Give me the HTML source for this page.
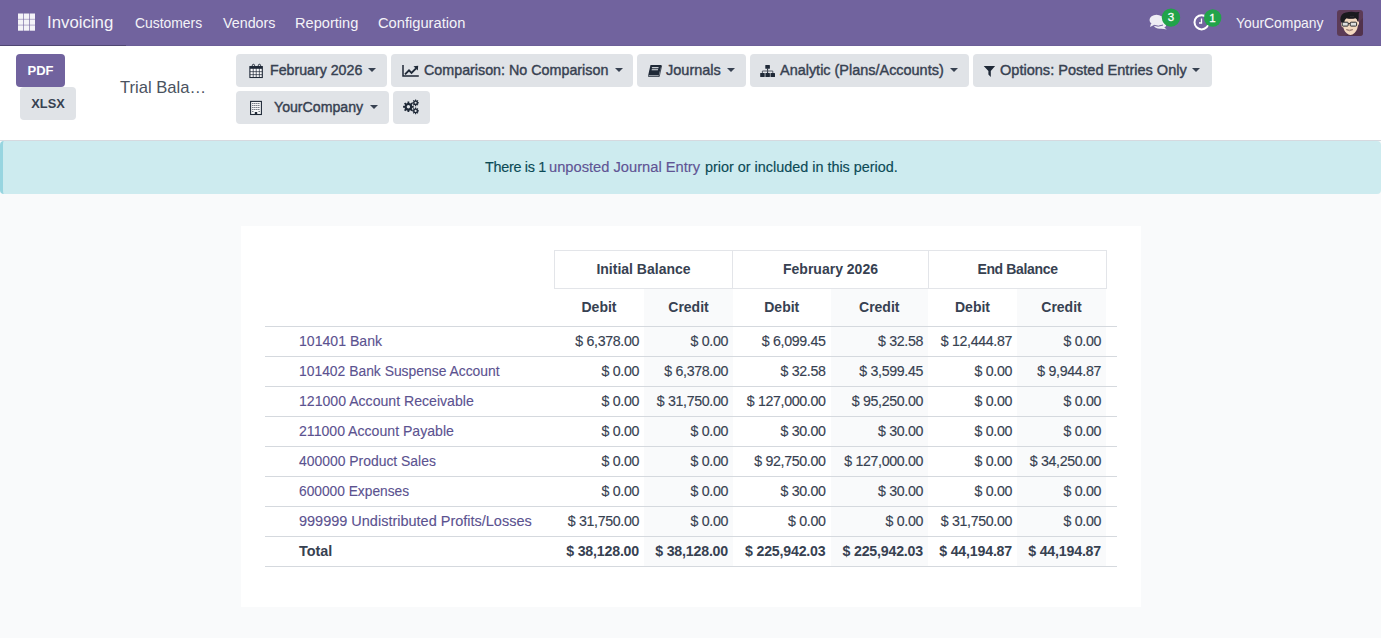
<!DOCTYPE html>
<html><head><meta charset="utf-8">
<style>
*{box-sizing:border-box;margin:0;padding:0}
html,body{width:1381px;height:638px;overflow:hidden}
body{font-family:"Liberation Sans",sans-serif;background:#f9fafb;color:#374151;position:relative}
.abs{position:absolute;white-space:nowrap}
#nav{position:absolute;left:0;top:0;width:1381px;height:46px;background:#71639e;border-bottom:1px solid #6c5f98}
#brandline{position:absolute;left:0;top:45px;width:126px;height:1px;background:#4f4672}
.nt{position:absolute;color:#f4f3f8;font-size:14px;line-height:20px;top:13px;white-space:nowrap}
#cp{position:absolute;left:0;top:46px;width:1381px;height:95px;background:#fff;border-bottom:1px solid #d6d9df}
.btn{position:absolute;height:33px;border-radius:4px;background:#e0e3e7;color:#374151;font-size:14.3px;line-height:33px;white-space:nowrap;-webkit-text-stroke:0.4px #374151}
.btn span{position:absolute;top:0}
.caret{position:absolute;top:14px;width:0;height:0;border-left:4.6px solid transparent;border-right:4.6px solid transparent;border-top:4.6px solid #374151}
#alert{position:absolute;left:0;top:141px;width:1381px;height:53px;background:#cdebef;border-left:3px solid #97d5e0;border-radius:4px}
.at{top:157px;font-size:14.4px;line-height:20px;color:#0b4a56;-webkit-text-stroke:0.15px currentColor}
#sheet{position:absolute;left:241px;top:226px;width:900px;height:381px;background:#fff}
#sheet div{position:absolute;white-space:nowrap}
.gc{background:#f9fafb}
.hc{border:1px solid #e3e5e9;text-align:center;font-weight:bold;font-size:14px;line-height:37px;color:#374151}
.h2{text-align:center;font-weight:bold;font-size:14px;line-height:38px;height:38px;color:#374151}
.rl{height:1px;background:#d5d9de}
.an{font-size:14.1px;line-height:29px;color:#5b5290;-webkit-text-stroke:0.12px #5b5290}
.num{text-align:right;padding-right:5px;font-size:14.2px;letter-spacing:-0.34px;line-height:29px;color:#374151;-webkit-text-stroke:0.15px #374151}
.tot{font-weight:bold;color:#374151;-webkit-text-stroke:0}
.num.tot{font-size:14.2px;letter-spacing:-0.2px;-webkit-text-stroke:0}
</style></head><body>
<div id="nav"><div id="brandline"></div>
  <svg class="abs" style="left:18px;top:13px" width="17" height="18" viewBox="0 -0.5 17 18"><g fill="#f4f3f8"><rect x="0" y="0" width="5.3" height="5.4"/><rect x="5.9" y="0" width="5.3" height="5.4"/><rect x="11.8" y="0" width="5.3" height="5.4"/><rect x="0" y="5.9" width="5.3" height="5.4"/><rect x="5.9" y="5.9" width="5.3" height="5.4"/><rect x="11.8" y="5.9" width="5.3" height="5.4"/><rect x="0" y="11.8" width="5.3" height="5.4"/><rect x="5.9" y="11.8" width="5.3" height="5.4"/><rect x="11.8" y="11.8" width="5.3" height="5.4"/></g></svg>
  <div class="nt" style="left:47px;font-size:16.8px;top:13px">Invoicing</div>
  <div class="nt" style="left:135px;font-size:13.9px">Customers</div>
  <div class="nt" style="left:223px;font-size:14.3px">Vendors</div>
  <div class="nt" style="left:295px;font-size:14.6px">Reporting</div>
  <div class="nt" style="left:378px;font-size:14.7px">Configuration</div>
  <div class="nt" style="left:1236px;font-size:13.9px">YourCompany</div>
  <svg class="abs" style="left:1140px;top:5px" width="90" height="35" viewBox="1140 5 90 35">
    <!-- chat bubbles -->
    <g fill="#eeedf4">
      <ellipse cx="1160" cy="25.2" rx="6" ry="3.6"/>
      <path d="M1163.5 27 L1166.8 29.5 L1161 28.5 Z"/>
      <ellipse cx="1156.5" cy="20" rx="7" ry="5.3"/>
      <path d="M1151 23.5 L1150 27 L1155 24.6 Z"/>
    </g>
    <path d="M1154 25.3 Q1158 27.2 1163 25" stroke="#71639e" stroke-width="1" fill="none"/>
    <circle cx="1171" cy="17.6" r="9.2" fill="#21a34a"/>
    <text x="1171" y="21.4" text-anchor="middle" font-family="Liberation Sans" font-size="11.5" fill="#fff" stroke="#fff" stroke-width="0.3">3</text>
    <!-- clock -->
    <circle cx="1201.6" cy="22.3" r="7.1" stroke="#fff" stroke-width="2" fill="none"/>
    <path d="M1201.5 18.5 V23 H1199" stroke="#fff" stroke-width="1.3" fill="none"/>
    <circle cx="1212.7" cy="18" r="8.7" fill="#21a34a"/>
    <text x="1212.5" y="21.6" text-anchor="middle" font-family="Liberation Sans" font-size="11.5" fill="#fff" stroke="#fff" stroke-width="0.3">1</text>
  </svg>
  <svg class="abs" style="left:1337px;top:10px" width="26" height="26" viewBox="0 0 26 26">
    <rect width="26" height="26" rx="3" fill="#5c3b56"/><path d="M26 8 V23 Q26 26 23 26 H8 Z" fill="#4e2f48" opacity="0.7"/>
    <path d="M5.5 12 Q3.8 12.3 4 14.5 Q4.4 17 6.3 17.6 Q7.5 22.5 11.5 24.6 Q13.5 25.4 15.5 24.5 Q20 22 21 15.5 Q22.5 14.5 22 12 Q21 11 20.5 11.5 L20 7.5 Q14 9 8 8 Z" fill="#f4d9c0"/>
    <path d="M3.3 9.5 Q3.5 3.5 9 2.4 Q14 1.3 19 2.2 Q21.5 1.8 22.6 2 Q21.5 3.2 21.7 5 Q22.2 7.5 20.8 11.5 Q20.2 9 18.5 8.2 Q14 9.5 9.5 8.2 Q7.5 9.5 7 13 L5.5 12.8 Q3.3 12 3.3 9.5 Z" fill="#1a1a1e"/>
    <path d="M13 6.5 Q15 7 17 6.5" stroke="#3a3a40" stroke-width="0.6" fill="none"/>
    <g stroke="#2a2a2e" stroke-width="1" fill="#dedede">
      <rect x="5.2" y="12.2" width="6" height="3.9" rx="0.9"/>
      <rect x="13.2" y="12.2" width="6.4" height="3.9" rx="0.9"/>
    </g>
    <path d="M11.2 13.5 H13.2" stroke="#2a2a2e" stroke-width="0.9"/>
    <path d="M9.3 19.6 Q12.5 22 15.8 19.6 Q12.5 20.6 9.3 19.6 Z" fill="#fff" stroke="#8b6a5e" stroke-width="0.7"/>
  </svg>
</div>
<div id="cp">
  <div class="btn" style="left:16px;top:8px;width:49px;background:#71639e;color:#fff;font-size:13px;text-align:center;font-weight:bold;-webkit-text-stroke:0">PDF</div>
  <div class="btn" style="left:20px;top:41px;width:56px;font-size:12.8px;text-align:center;font-weight:bold;-webkit-text-stroke:0">XLSX</div>
  <div class="abs" style="left:120px;top:31px;font-size:16.6px;line-height:22px;color:#4a5260">Trial Bala…</div>

  <div class="btn" style="left:236px;top:8px;width:151px"><span style="left:34px;font-size:14.2px">February 2026</span><i class="caret" style="left:132px"></i></div>
  <div class="btn" style="left:391px;top:8px;width:242px"><span style="left:33px;font-size:14.3px">Comparison: No Comparison</span><i class="caret" style="left:224px"></i></div>
  <div class="btn" style="left:637px;top:8px;width:109px"><span style="left:29px;font-size:14.5px">Journals</span><i class="caret" style="left:90px"></i></div>
  <div class="btn" style="left:750px;top:8px;width:219px"><span style="left:30px;font-size:14.45px">Analytic (Plans/Accounts)</span><i class="caret" style="left:200px"></i></div>
  <div class="btn" style="left:973px;top:8px;width:239px"><span style="left:27px;font-size:14.55px">Options: Posted Entries Only</span><i class="caret" style="left:219px"></i></div>
  <div class="btn" style="left:236px;top:45px;width:153px"><span style="left:38px;font-size:14.15px">YourCompany</span><i class="caret" style="left:134px"></i></div>
  <div class="btn" style="left:393px;top:45px;width:37px"></div>
</div>

<svg class="abs" style="left:0;top:0" width="1381" height="140" viewBox="0 0 1381 140">
 <!-- calendar -->
 <rect x="249.9" y="66.6" width="12.4" height="10.9" fill="#fbfbfc" stroke="#1f2937" stroke-width="1.1"/>
 <rect x="249.9" y="66.4" width="12.4" height="2.4" fill="#1f2937"/>
 <g fill="#1f2937">
  <rect x="252.8" y="68" width="0.7" height="9.5"/><rect x="255.8" y="68" width="0.7" height="9.5"/><rect x="258.9" y="68" width="0.7" height="9.5"/>
  <rect x="249.9" y="71.4" width="12.4" height="0.7"/><rect x="249.9" y="74.4" width="12.4" height="0.7"/>
 </g>
 <path d="M252.3 67.5 V65.6 Q252.3 64.3 253.5 64.3 Q254.6 64.3 254.6 65.6 V67.5" stroke="#1f2937" stroke-width="1" fill="none"/>
 <path d="M258.3 67.5 V65.6 Q258.3 64.3 259.5 64.3 Q260.6 64.3 260.6 65.6 V67.5" stroke="#1f2937" stroke-width="1" fill="none"/>
 <!-- line chart -->
 <path d="M403 65 V76 H418.8" stroke="#1f2937" stroke-width="1.5" fill="none"/>
 <path d="M405 74.3 L409 70.3 L411.5 72.8 L416 68.3" stroke="#1f2937" stroke-width="1.9" fill="none"/>
 <path d="M413.5 66.2 L418.2 65.8 L417.8 70.5 Z" fill="#1f2937"/>
 <!-- book -->
 <path d="M650.5 65 H661.6 L658.8 75.3 H648.2 Z" fill="#1f2937"/>
 <path d="M648.2 75.3 H658.8 L659.2 76.7 H648.4 Q647.6 76 648.2 75.3 Z" fill="#1f2937"/>
 <rect x="652" y="67.2" width="6.5" height="0.9" fill="#e0e3e7" transform="skewX(-15)" style="transform-box:fill-box"/>
 <path d="M652.3 67.4 H658.6 L658.4 68.3 H652.1 Z M651.8 69.3 H658.1 L657.9 70.2 H651.6 Z" fill="#e0e3e7"/>
 <path d="M648.8 75.4 H658.6 L658.4 76 H648.7 Z" fill="#e0e3e7"/>
 <path d="M661.6 65.8 L659.2 76.7" stroke="#1f2937" stroke-width="0.8"/>
 <!-- sitemap -->
 <g fill="#1f2937">
  <rect x="765.3" y="65" width="4.6" height="3.8" rx="0.5"/>
  <rect x="760.2" y="73" width="4.5" height="3.9" rx="0.5"/>
  <rect x="765.4" y="73" width="4.5" height="3.9" rx="0.5"/>
  <rect x="770.5" y="73" width="4.5" height="3.9" rx="0.5"/>
  <rect x="767.1" y="68.5" width="1" height="4.6"/>
 </g>
 <path d="M762.4 73 V71 H772.8 V73" stroke="#555b66" stroke-width="1" fill="none"/>
 <!-- filter -->
 <path d="M983.7 66 H995.1 L990.8 71 V76.9 L988.4 74.6 V71 Z" fill="#1f2937"/>
 <!-- building -->
 <rect x="250.6" y="101.4" width="10.8" height="13.1" stroke="#1f2937" stroke-width="1.1" fill="#f6f7f8"/>
 <g stroke="#1f2937" stroke-width="1" stroke-dasharray="1.1 0.9" opacity="0.8">
  <path d="M252.3 103.5 H260 M252.3 105.5 H260 M252.3 107.5 H260 M252.3 109.5 H260"/>
  <path d="M252.3 111.5 H253.4 M258.6 111.5 H259.7"/>
 </g>
 <rect x="254.8" y="112" width="2.4" height="2.5" fill="#1f2937"/>
</svg>
<svg class="abs" style="left:396px;top:94px" width="32" height="26" viewBox="0 0 32 26"><path fill="#1f2937" fill-rule="evenodd" d="M11.53 8.90 L11.47 7.48 L13.33 7.48 L13.27 8.90 L14.54 9.42 L15.51 8.38 L16.82 9.69 L15.78 10.66 L16.30 11.93 L17.72 11.87 L17.72 13.73 L16.30 13.67 L15.78 14.94 L16.82 15.91 L15.51 17.22 L14.54 16.18 L13.27 16.70 L13.33 18.12 L11.47 18.12 L11.53 16.70 L10.26 16.18 L9.29 17.22 L7.98 15.91 L9.02 14.94 L8.50 13.67 L7.08 13.73 L7.08 11.87 L8.50 11.93 L9.02 10.66 L7.98 9.69 L9.29 8.38 L10.26 9.42 Z M14.10 12.80 A1.7 1.7 0 1 0 10.70 12.80 A1.7 1.7 0 1 0 14.10 12.80 Z M19.05 6.36 L19.02 5.45 L20.18 5.45 L20.15 6.36 L20.94 6.69 L21.56 6.02 L22.38 6.84 L21.71 7.46 L22.04 8.25 L22.95 8.22 L22.95 9.38 L22.04 9.35 L21.71 10.14 L22.38 10.76 L21.56 11.58 L20.94 10.91 L20.15 11.24 L20.18 12.15 L19.02 12.15 L19.05 11.24 L18.26 10.91 L17.64 11.58 L16.82 10.76 L17.49 10.14 L17.16 9.35 L16.25 9.38 L16.25 8.22 L17.16 8.25 L17.49 7.46 L16.82 6.84 L17.64 6.02 L18.26 6.69 Z M20.65 8.80 A1.05 1.05 0 1 0 18.55 8.80 A1.05 1.05 0 1 0 20.65 8.80 Z M19.05 14.46 L19.02 13.55 L20.18 13.55 L20.15 14.46 L20.94 14.79 L21.56 14.12 L22.38 14.94 L21.71 15.56 L22.04 16.35 L22.95 16.32 L22.95 17.48 L22.04 17.45 L21.71 18.24 L22.38 18.86 L21.56 19.68 L20.94 19.01 L20.15 19.34 L20.18 20.25 L19.02 20.25 L19.05 19.34 L18.26 19.01 L17.64 19.68 L16.82 18.86 L17.49 18.24 L17.16 17.45 L16.25 17.48 L16.25 16.32 L17.16 16.35 L17.49 15.56 L16.82 14.94 L17.64 14.12 L18.26 14.79 Z M20.65 16.90 A1.05 1.05 0 1 0 18.55 16.90 A1.05 1.05 0 1 0 20.65 16.90 Z"/></svg>
<div id="alert"></div>
<div class="abs at" style="left:485px;letter-spacing:-0.3px">There is 1</div>
<div class="abs at" style="left:549px;color:#5f5494;font-size:14.7px">unposted Journal Entry</div>
<div class="abs at" style="left:705px">prior or included in this period.</div>
<div id="sheet">
<div class="gc" style="left:403px;top:62px;width:89px;height:278px"></div>
<div class="gc" style="left:589.5px;top:62px;width:97.5px;height:278px"></div>
<div class="gc" style="left:776px;top:62px;width:89px;height:278px"></div>
<div class="hc" style="left:313px;top:24px;width:179px;height:39px;letter-spacing:0">Initial Balance</div>
<div class="hc" style="left:491px;top:24px;width:197px;height:39px;letter-spacing:0">February 2026</div>
<div class="hc" style="left:687px;top:24px;width:179px;height:39px;letter-spacing:-0.35px">End Balance</div>
<div class="h2" style="left:313px;top:62px;width:90px">Debit</div>
<div class="h2" style="left:403px;top:62px;width:89px">Credit</div>
<div class="h2" style="left:492px;top:62px;width:97.5px">Debit</div>
<div class="h2" style="left:589.5px;top:62px;width:97.5px">Credit</div>
<div class="h2" style="left:687px;top:62px;width:89px">Debit</div>
<div class="h2" style="left:776px;top:62px;width:89px">Credit</div>
<div class="rl" style="left:24px;top:100px;width:852px"></div>
<div class="rl" style="left:24px;top:130px;width:852px"></div>
<div class="rl" style="left:24px;top:160px;width:852px"></div>
<div class="rl" style="left:24px;top:190px;width:852px"></div>
<div class="rl" style="left:24px;top:220px;width:852px"></div>
<div class="rl" style="left:24px;top:250px;width:852px"></div>
<div class="rl" style="left:24px;top:280px;width:852px"></div>
<div class="rl" style="left:24px;top:310px;width:852px"></div>
<div class="rl" style="left:24px;top:340px;width:852px"></div>
<div class="an" style="left:58px;top:101px;font-size:14.1px">101401 Bank</div>
<div class="num" style="left:313px;top:101px;width:90px">$ 6,378.00</div>
<div class="num" style="left:403px;top:101px;width:89px">$ 0.00</div>
<div class="num" style="left:492px;top:101px;width:97.5px">$ 6,099.45</div>
<div class="num" style="left:589.5px;top:101px;width:97.5px">$ 32.58</div>
<div class="num" style="left:687px;top:101px;width:89px">$ 12,444.87</div>
<div class="num" style="left:776px;top:101px;width:89px">$ 0.00</div>
<div class="an" style="left:58px;top:131px;font-size:13.88px">101402 Bank Suspense Account</div>
<div class="num" style="left:313px;top:131px;width:90px">$ 0.00</div>
<div class="num" style="left:403px;top:131px;width:89px">$ 6,378.00</div>
<div class="num" style="left:492px;top:131px;width:97.5px">$ 32.58</div>
<div class="num" style="left:589.5px;top:131px;width:97.5px">$ 3,599.45</div>
<div class="num" style="left:687px;top:131px;width:89px">$ 0.00</div>
<div class="num" style="left:776px;top:131px;width:89px">$ 9,944.87</div>
<div class="an" style="left:58px;top:161px;font-size:14.1px">121000 Account Receivable</div>
<div class="num" style="left:313px;top:161px;width:90px">$ 0.00</div>
<div class="num" style="left:403px;top:161px;width:89px">$ 31,750.00</div>
<div class="num" style="left:492px;top:161px;width:97.5px">$ 127,000.00</div>
<div class="num" style="left:589.5px;top:161px;width:97.5px">$ 95,250.00</div>
<div class="num" style="left:687px;top:161px;width:89px">$ 0.00</div>
<div class="num" style="left:776px;top:161px;width:89px">$ 0.00</div>
<div class="an" style="left:58px;top:191px;font-size:14.1px">211000 Account Payable</div>
<div class="num" style="left:313px;top:191px;width:90px">$ 0.00</div>
<div class="num" style="left:403px;top:191px;width:89px">$ 0.00</div>
<div class="num" style="left:492px;top:191px;width:97.5px">$ 30.00</div>
<div class="num" style="left:589.5px;top:191px;width:97.5px">$ 30.00</div>
<div class="num" style="left:687px;top:191px;width:89px">$ 0.00</div>
<div class="num" style="left:776px;top:191px;width:89px">$ 0.00</div>
<div class="an" style="left:58px;top:221px;font-size:13.92px">400000 Product Sales</div>
<div class="num" style="left:313px;top:221px;width:90px">$ 0.00</div>
<div class="num" style="left:403px;top:221px;width:89px">$ 0.00</div>
<div class="num" style="left:492px;top:221px;width:97.5px">$ 92,750.00</div>
<div class="num" style="left:589.5px;top:221px;width:97.5px">$ 127,000.00</div>
<div class="num" style="left:687px;top:221px;width:89px">$ 0.00</div>
<div class="num" style="left:776px;top:221px;width:89px">$ 34,250.00</div>
<div class="an" style="left:58px;top:251px;font-size:13.75px">600000 Expenses</div>
<div class="num" style="left:313px;top:251px;width:90px">$ 0.00</div>
<div class="num" style="left:403px;top:251px;width:89px">$ 0.00</div>
<div class="num" style="left:492px;top:251px;width:97.5px">$ 30.00</div>
<div class="num" style="left:589.5px;top:251px;width:97.5px">$ 30.00</div>
<div class="num" style="left:687px;top:251px;width:89px">$ 0.00</div>
<div class="num" style="left:776px;top:251px;width:89px">$ 0.00</div>
<div class="an" style="left:58px;top:281px;font-size:14.49px">999999 Undistributed Profits/Losses</div>
<div class="num" style="left:313px;top:281px;width:90px">$ 31,750.00</div>
<div class="num" style="left:403px;top:281px;width:89px">$ 0.00</div>
<div class="num" style="left:492px;top:281px;width:97.5px">$ 0.00</div>
<div class="num" style="left:589.5px;top:281px;width:97.5px">$ 0.00</div>
<div class="num" style="left:687px;top:281px;width:89px">$ 31,750.00</div>
<div class="num" style="left:776px;top:281px;width:89px">$ 0.00</div>
<div class="an tot" style="left:58px;top:311px;font-size:14.4px">Total</div>
<div class="num tot" style="left:313px;top:311px;width:90px">$ 38,128.00</div>
<div class="num tot" style="left:403px;top:311px;width:89px">$ 38,128.00</div>
<div class="num tot" style="left:492px;top:311px;width:97.5px">$ 225,942.03</div>
<div class="num tot" style="left:589.5px;top:311px;width:97.5px">$ 225,942.03</div>
<div class="num tot" style="left:687px;top:311px;width:89px">$ 44,194.87</div>
<div class="num tot" style="left:776px;top:311px;width:89px">$ 44,194.87</div>
</div>
</body></html>
